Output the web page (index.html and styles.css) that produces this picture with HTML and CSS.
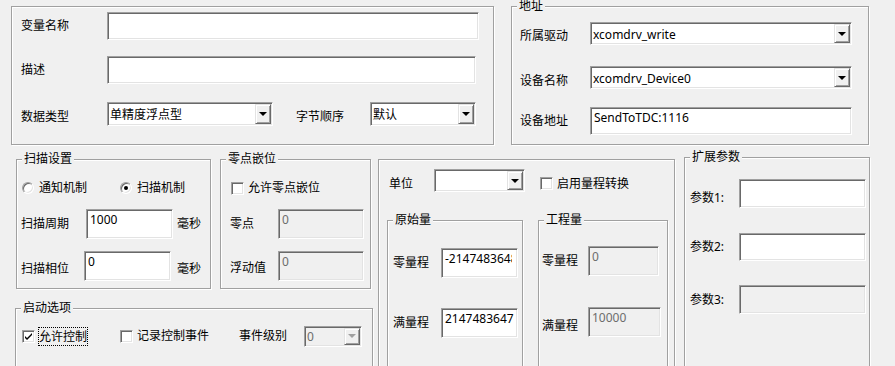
FILE: index.html
```html
<!DOCTYPE html>
<html>

<head>
    <meta charset='utf-8'>
    <title>变量属性</title>
    <link rel="stylesheet" href="styles.css">
</head>

<body>
    <div class="dialog">
        <div class="top-row">
            <div class="group g-var">
                <div class="row var-r1">
                    <span class="lbl lw86">变量名称</span>
                    <div class="edit e-name"></div>
                </div>
                <div class="row var-r2">
                    <span class="lbl lw86">描述</span>
                    <div class="edit e-desc"></div>
                </div>
                <div class="row var-r3">
                    <span class="lbl lw86 lo">数据类型</span>
                    <div class="combo c-type"><span class="combo-text">单精度浮点型</span><span class="combo-btn"></span></div>
                    <span class="lbl lbl-order lo">字节顺序</span>
                    <div class="combo c-order"><span class="combo-text">默认</span><span class="combo-btn"></span></div>
                </div>
            </div>

            <div class="group g-addr">
                <span class="group-title">地址</span>
                <div class="row addr-r1">
                    <span class="lbl lw70 lo-sm">所属驱动</span>
                    <div class="combo c-addr"><span class="combo-text">xcomdrv_write</span><span class="combo-btn"></span></div>
                </div>
                <div class="row addr-r2">
                    <span class="lbl lw70 lo">设备名称</span>
                    <div class="combo c-addr"><span class="combo-text">xcomdrv_Device0</span><span class="combo-btn"></span></div>
                </div>
                <div class="row addr-r3">
                    <span class="lbl lw70">设备地址</span>
                    <div class="edit e-addr">SendToTDC:1116</div>
                </div>
            </div>
        </div>

        <div class="bottom-row">
            <div class="left-col">
                <div class="left-top">
                    <div class="group g-scan">
                        <span class="group-title">扫描设置</span>
                        <div class="row scan-r1">
                            <span class="radio rd1"></span><span class="opt">通知机制</span>
                            <span class="radio rd2 on"></span><span class="opt">扫描机制</span>
                        </div>
                        <div class="row scan-r2">
                            <span class="lbl lw65">扫描周期</span>
                            <div class="edit e-scan">1000</div>
                            <span class="lbl unit1">毫秒</span>
                        </div>
                        <div class="row scan-r3">
                            <span class="lbl lw63 lo">扫描相位</span>
                            <div class="edit e-scan">0</div>
                            <span class="lbl unit2 lo">毫秒</span>
                        </div>
                    </div>

                    <div class="group g-zero">
                        <span class="group-title">零点嵌位</span>
                        <div class="row zero-r1">
                            <span class="chk zero-chk"></span><span class="opt">允许零点嵌位</span>
                        </div>
                        <div class="row zero-r2">
                            <span class="lbl lw48">零点</span>
                            <div class="edit dis e-zero">0</div>
                        </div>
                        <div class="row zero-r3">
                            <span class="lbl lw48 lo-sm">浮动值</span>
                            <div class="edit dis e-zero">0</div>
                        </div>
                    </div>
                </div>

                <div class="group g-start">
                    <span class="group-title">启动选项</span>
                    <div class="row start-r1">
                        <span class="chk on"><svg width="9" height="9" viewBox="0 0 9 9"><path d="M1 4l2 2 5-5v2l-5 5-2-2z" fill="#000"/></svg></span>
                        <span class="focus">允许控制</span>
                        <span class="chk start-chk2"></span><span class="opt">记录控制事件</span>
                        <span class="lbl lbl-level">事件级别</span>
                        <div class="combo dis c-level"><span class="combo-text">0</span><span class="combo-btn"></span></div>
                    </div>
                </div>
            </div>

            <div class="group g-mid">
                <div class="row mid-r1">
                    <span class="lbl lw45 lo">单位</span>
                    <div class="combo c-unit"><span class="combo-text"></span><span class="combo-btn"></span></div>
                    <span class="chk mid-chk lo"></span><span class="opt lo">启用量程转换</span>
                </div>
                <div class="mid-groups">
                    <div class="group g-raw">
                        <span class="group-title">原始量</span>
                        <div class="row raw-r1">
                            <span class="lbl lw48">零量程</span>
                            <div class="edit e-raw"><span class="edit-clip">-2147483648</span></div>
                        </div>
                        <div class="row raw-r2">
                            <span class="lbl lw48">满量程</span>
                            <div class="edit e-raw">2147483647</div>
                        </div>
                    </div>
                    <div class="group g-eng">
                        <span class="group-title">工程量</span>
                        <div class="row eng-r1">
                            <span class="lbl lw46">零量程</span>
                            <div class="edit dis e-eng1">0</div>
                        </div>
                        <div class="row eng-r2">
                            <span class="lbl lw46 lo-lg">满量程</span>
                            <div class="edit dis e-eng2">10000</div>
                        </div>
                    </div>
                </div>
            </div>

            <div class="group g-ext">
                <span class="group-title">扩展参数</span>
                <div class="row ext-r1">
                    <span class="lbl lw49 lo-lg">参数1:</span>
                    <div class="edit e-ext"></div>
                </div>
                <div class="row ext-r2">
                    <span class="lbl lw49">参数2:</span>
                    <div class="edit e-ext"></div>
                </div>
                <div class="row ext-r3">
                    <span class="lbl lw49">参数3:</span>
                    <div class="edit dis e-ext"></div>
                </div>
            </div>
        </div>
    </div>
</body>

</html>
```

FILE: styles.css
```css
* {
    margin: 0;
    padding: 0;
    box-sizing: border-box;
}

body {
    background-color: #f0f0f0;
    font-family: "Noto Sans", "Noto Sans CJK SC", sans-serif;
    font-size: 12px;
    line-height: 16px;
    color: #000;
    overflow: hidden;
}

.dialog {
    width: 895px;
    height: 366px;
    overflow: hidden;
}

/* group box with etched frame */
.group {
    position: relative;
    flex: none;
    border: 1px solid #a0a0a0;
    box-shadow: inset 1px 1px 0 #fff, 1px 1px 0 #fff;
}

.group-title {
    position: absolute;
    top: -7px;
    left: 5px;
    padding: 0 2px;
    line-height: 12px;
    background-color: #f0f0f0;
    white-space: nowrap;
}

.row {
    display: flex;
    align-items: center;
}

.lbl,
.opt {
    flex: none;
    white-space: nowrap;
}

.lo {
    margin-top: 6px;
}

.lo-sm {
    margin-top: 4px;
}

.lo-lg {
    margin-top: 8px;
}

/* sunken edit box */
.edit {
    flex: none;
    background-color: #fff;
    border: 1px solid;
    border-color: #a0a0a0 #fff #fff #a0a0a0;
    box-shadow: inset 1px 1px 0 #696969, inset -1px -1px 0 #e3e3e3;
    padding: 2px 3px 0;
    white-space: nowrap;
    overflow: hidden;
}

.edit-clip {
    display: block;
    width: 67px;
    overflow: hidden;
}

.edit.dis {
    background-color: #f0f0f0;
    color: #6d6d6d;
}

/* combo box */
.combo {
    flex: none;
    display: flex;
    background-color: #fff;
    border: 1px solid;
    border-color: #a0a0a0 #fff #fff #a0a0a0;
    box-shadow: inset 1px 1px 0 #696969, inset -1px -1px 0 #e3e3e3;
    padding: 1px;
}

.combo-text {
    flex: 1;
    padding: 3px 1px 0;
    white-space: nowrap;
    overflow: hidden;
}

.combo-btn {
    width: 16px;
    flex: none;
    display: flex;
    align-items: center;
    justify-content: center;
    background-color: #f0f0f0;
    border: 1px solid;
    border-color: #e3e3e3 #696969 #696969 #e3e3e3;
    box-shadow: inset 1px 1px 0 #fff, inset -1px -1px 0 #a0a0a0;
}

.combo-btn::after {
    content: "";
    border-left: 4px solid transparent;
    border-right: 4px solid transparent;
    border-top: 4px solid #000;
}

.combo.dis {
    background-color: #f0f0f0;
    color: #6d6d6d;
}

.combo.dis .combo-text {
    padding-top: 1px;
}

.combo.dis .combo-btn::after {
    border-top-color: #a0a0a0;
}

/* check box and radio */
.chk {
    flex: none;
    width: 13px;
    height: 13px;
    display: flex;
    align-items: center;
    justify-content: center;
    background-color: #fff;
    border: 1px solid;
    border-color: #a0a0a0 #fff #fff #a0a0a0;
    box-shadow: inset 1px 1px 0 #696969, inset -1px -1px 0 #e3e3e3;
}

.radio {
    flex: none;
    width: 12px;
    height: 12px;
    display: flex;
    align-items: center;
    justify-content: center;
    border-radius: 50%;
    background-color: #fff;
    border: 1px solid;
    border-color: #a0a0a0 #fff #fff #a0a0a0;
    box-shadow: inset 1px 1px 0 #696969, inset -1px -1px 0 #e3e3e3;
}

.radio.on::after {
    content: "";
    width: 4px;
    height: 4px;
    border-radius: 50%;
    background-color: #000;
}

.focus {
    flex: none;
    margin-left: 3px;
    border: 1px dotted #000;
    line-height: 17px;
    white-space: nowrap;
}

/* top row */
.top-row {
    display: flex;
    align-items: flex-start;
    padding: 6px 0 0 11px;
}

.g-var {
    width: 483px;
    height: 139px;
    padding: 5px 0 0 9px;
}

.lw86 {
    width: 86px;
}

.var-r1 {
    height: 28px;
}

.e-name {
    width: 372px;
    height: 28px;
}

.var-r2 {
    margin-top: 16px;
    height: 28px;
}

.e-desc {
    width: 369px;
    height: 28px;
}

.var-r3 {
    margin-top: 18px;
    height: 24px;
}

.c-type {
    width: 166px;
    height: 24px;
}

.lbl-order {
    margin-left: 23px;
    width: 74px;
}

.c-order {
    width: 106px;
    height: 24px;
}

.g-addr {
    margin-left: 17px;
    width: 358px;
    height: 139px;
    padding: 15px 0 0 8px;
}

.lw70 {
    width: 70px;
}

.addr-r1 {
    height: 23px;
}

.c-addr {
    width: 262px;
    height: 23px;
}

.addr-r2 {
    margin-top: 21px;
    height: 23px;
}

.addr-r3 {
    margin-top: 18px;
    height: 28px;
}

.e-addr {
    width: 262px;
    height: 28px;
}

/* bottom row */
.bottom-row {
    display: flex;
    align-items: flex-start;
    margin-top: 14px;
    padding-left: 15px;
}

.left-col {
    width: 358px;
    flex: none;
}

.left-top {
    display: flex;
}

.g-scan {
    margin-left: 1px;
    width: 195px;
    height: 130px;
    padding-left: 4px;
}

.scan-r1 {
    margin-top: 20px;
    height: 16px;
}

.rd1 {
    margin-left: 1px;
}

.rd2 {
    margin-left: 33px;
}

.radio + .opt {
    margin-left: 5px;
}

.scan-r2 {
    margin-top: 13px;
    height: 30px;
}

.scan-r3 {
    margin-top: 12px;
    height: 30px;
}

.lw65 {
    width: 65px;
}

.lw63 {
    width: 63px;
}

.e-scan {
    width: 87px;
    height: 30px;
}

.unit1 {
    margin-left: 4px;
}

.unit2 {
    margin-left: 6px;
}

.g-zero {
    margin-left: 9px;
    width: 151px;
    height: 130px;
    padding-left: 9px;
}

.zero-r1 {
    margin-top: 20px;
    height: 16px;
}

.zero-chk {
    margin-left: 1px;
}

.chk + .opt {
    margin-left: 4px;
}

.zero-r2 {
    margin-top: 13px;
    height: 30px;
}

.zero-r3 {
    margin-top: 12px;
    height: 30px;
}

.lw48 {
    width: 48px;
}

.e-zero {
    width: 86px;
    height: 30px;
}

.g-start {
    margin-top: 19px;
    width: 358px;
    height: 80px;
    padding-left: 6px;
}

.start-r1 {
    margin-top: 16px;
    height: 22px;
}

.start-chk2 {
    margin-left: 32px;
}

.lbl-level {
    margin-left: 30px;
}

.c-level {
    margin-left: 17px;
    width: 58px;
    height: 21px;
}

/* middle group */
.g-mid {
    margin-left: 5px;
    width: 297px;
    height: 220px;
    padding-left: 8px;
}

.mid-r1 {
    margin-top: 9px;
    height: 23px;
    padding-left: 2px;
}

.lw45 {
    width: 45px;
}

.c-unit {
    width: 91px;
    height: 23px;
}

.mid-chk {
    margin-left: 15px;
}

.mid-groups {
    display: flex;
    align-items: flex-start;
    margin-top: 28px;
    gap: 15px;
}

.g-raw {
    width: 136px;
    height: 160px;
    padding-left: 5px;
}

.raw-r1 {
    margin-top: 27px;
    height: 30px;
}

.raw-r2 {
    margin-top: 30px;
    height: 30px;
}

.e-raw {
    width: 77px;
    height: 30px;
}

.g-eng {
    width: 130px;
    height: 160px;
    padding-left: 3px;
}

.lw46 {
    width: 46px;
}

.eng-r1 {
    margin-top: 25px;
    height: 30px;
}

.eng-r2 {
    margin-top: 31px;
    height: 30px;
}

.e-eng1 {
    width: 71px;
    height: 30px;
}

.e-eng2 {
    width: 73px;
    height: 30px;
}

/* extension params */
.g-ext {
    margin-left: 9px;
    margin-top: -2px;
    width: 186px;
    height: 220px;
    padding-left: 5px;
}

.lw49 {
    width: 49px;
}

.ext-r1 {
    margin-top: 21px;
    height: 29px;
}

.ext-r2 {
    margin-top: 25px;
    height: 28px;
}

.ext-r3 {
    margin-top: 24px;
    height: 29px;
}

.e-ext {
    width: 127px;
    height: 100%;
}
```
